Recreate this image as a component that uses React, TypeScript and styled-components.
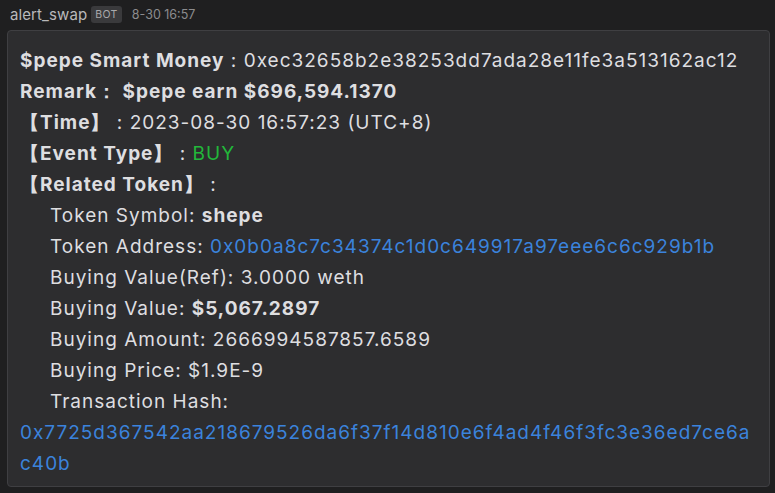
import React from "react";
import styled, { createGlobalStyle } from "styled-components";

const Global = createGlobalStyle`
  html, body { margin: 0; padding: 0; background: #1f1f20; }
  body { font-family: Inter, "Noto Sans", "Liberation Sans", sans-serif; }
`;

const Page = styled.div`
  width: 775px;
  height: 493px;
  box-sizing: border-box;
  padding: 4px 5px 0 7px;
  background: #1f1f20;
  overflow: hidden;
`;

const Header = styled.div`
  display: flex;
  align-items: center;
  height: 20px;
  padding-left: 3px;
  gap: 4px;
`;

const Name = styled.span`
  font-size: 15px;
  letter-spacing: 0.1px;
  color: #b9b9bb;
`;

const Badge = styled.span`
  font-size: 10.5px;
  line-height: 15px;
  padding: 1px 4px;
  border-radius: 3px;
  background: #3a3a3c;
  color: #a9a9ab;
  letter-spacing: 0.4px;
`;

const Time = styled.span`
  font-size: 12.5px;
  color: #8c8c8e;
  margin-left: 6px;
`;

const Card = styled.div`
  margin-top: 6px;
  background: #2d2d2f;
  border: 1px solid #3f3f42;
  border-radius: 4px;
  padding: 14px 12px 7px 12px;
  color: #dedee0;
  font-size: 19px;
  letter-spacing: 1px;
  line-height: 31px;
`;

const Line = styled.div<{ $indent?: boolean }>`
  padding-left: ${(p) => (p.$indent ? "30px" : "0")};
  white-space: nowrap;
`;

const B = styled.b`
  font-weight: 700;
`;

const Green = styled.span`
  color: #22b83a;
`;

const Link = styled.span`
  color: #3b83dc;
`;

const Hash = styled.div`
  color: #3b83dc;
  white-space: nowrap;
`;

const HASH = "0x7725d367542aa218679526da6f37f14d810e6f4ad4f46f3fc3e36ed7ce6ac40b";

export default function App() {
  return (
    <>
      <Global />
      <Page>
        <Header>
          <Name>alert_swap</Name>
          <Badge>BOT</Badge>
          <Time>8-30 16:57</Time>
        </Header>
        <Card>
          <Line>
            <B>$pepe Smart Money</B> : 0xec32658b2e38253dd7ada28e11fe3a513162ac12
          </Line>
          <Line>
            <B>Remark：&nbsp;$pepe earn $696,594.1370</B>
          </Line>
          <Line>
            <B>【Time】</B> : 2023-08-30 16:57:23 (UTC+8)
          </Line>
          <Line>
            <B>【Event Type】</B> : <Green>BUY</Green>
          </Line>
          <Line>
            <B>【Related Token】</B> :
          </Line>
          <Line $indent>
            Token Symbol: <B>shepe</B>
          </Line>
          <Line $indent>
            Token Address: <Link>0x0b0a8c7c34374c1d0c649917a97eee6c6c929b1b</Link>
          </Line>
          <Line $indent>Buying Value(Ref): 3.0000 weth</Line>
          <Line $indent>
            Buying Value: <B>$5,067.2897</B>
          </Line>
          <Line $indent>Buying Amount: 2666994587857.6589</Line>
          <Line $indent>Buying Price: $1.9E-9</Line>
          <Line $indent>Transaction Hash:</Line>
          <Hash>
            {HASH.slice(0, 62)}
            <br />
            {HASH.slice(62)}
          </Hash>
        </Card>
      </Page>
    </>
  );
}
